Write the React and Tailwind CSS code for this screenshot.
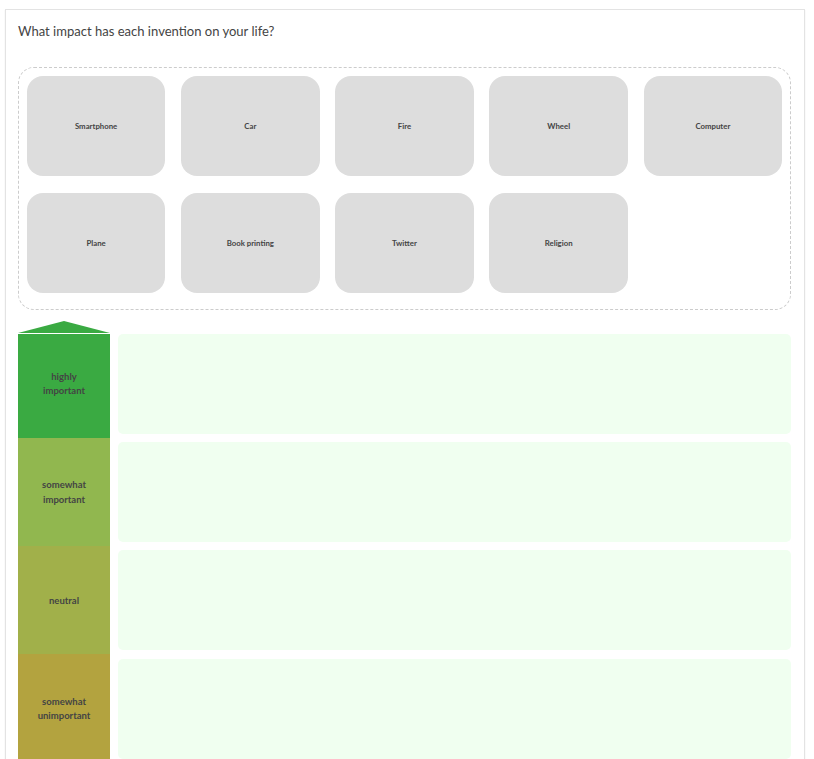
const inventions = [
  { name: "Smartphone" },
  { name: "Car" },
  { name: "Fire" },
  { name: "Wheel" },
  { name: "Computer" },
  { name: "Plane" },
  { name: "Book printing" },
  { name: "Twitter" },
  { name: "Religion" },
];

const levels = [
  { lines: ["highly", "important"], band: "h-[104px] pb-1 leading-[14.4px] bg-[#3aaa42]", row: "h-[104px]" },
  { lines: ["somewhat", "important"], band: "h-[108px] pb-px leading-[15px] bg-[#91b74f]", row: "h-[108px] pt-1" },
  { lines: ["neutral"], band: "h-[108px] pt-[2px] leading-[14.4px] bg-[#a1b04a]", row: "h-[108px] pt-1" },
  { lines: ["somewhat", "unimportant"], band: "h-[110px] leading-[14.4px] bg-[#b3a33f]", row: "h-[110px] pt-[5px]" },
];

function Invention({ name }) {
  return (
    <div className="flex h-[100px] items-center justify-center rounded-[16px] bg-[#dddddd] pb-px text-[7.8px] leading-[12px] font-bold text-[#444444]">
      {name}
    </div>
  );
}

function Level({ lines, band, row }) {
  return (
    <div className="flex">
      <div
        className={`flex w-[92px] flex-col items-center justify-center text-[9.5px] font-bold text-[#444444] ${band}`}
      >
        {lines.map((line) => (
          <span key={line}>{line}</span>
        ))}
      </div>
      <div className={`flex-1 pl-2 ${row}`}>
        <div className="h-[100px] rounded-[5px] bg-[#f0fff0]" />
      </div>
    </div>
  );
}

export default function App() {
  return (
    <div className="h-[759px] w-[814px] overflow-hidden bg-white pt-[9px] pl-[5px] font-['Lato','Open_Sans',sans-serif]">
      <div className="h-[780px] w-[800px] border border-[#e3e3e3] px-3 shadow-[0_1px_1px_rgba(0,0,0,0.12)]">
        <h1 className="mt-[10px] h-[22px] text-[13.04px] leading-[22px] whitespace-nowrap text-[#444444]">
          What impact has each invention on your life?
        </h1>
        <div className="mt-[25px] grid h-[243px] w-[773px] grid-cols-5 content-start gap-x-[15.6px] gap-y-[17px] rounded-[16px] border border-dashed border-[#cccccc] px-[7.8px] py-2">
          {inventions.map((item) => (
            <Invention key={item.name} {...item} />
          ))}
        </div>
        <svg className="mt-[11px] block h-3 w-[92px]" viewBox="0 0 92 12">
          <path d="M0 12L46 0L92 12Z" fill="#3aaa42" />
        </svg>
        <div className="mt-px w-[773px]">
          {levels.map((level) => (
            <Level key={level.lines.join(" ")} {...level} />
          ))}
        </div>
      </div>
    </div>
  );
}
